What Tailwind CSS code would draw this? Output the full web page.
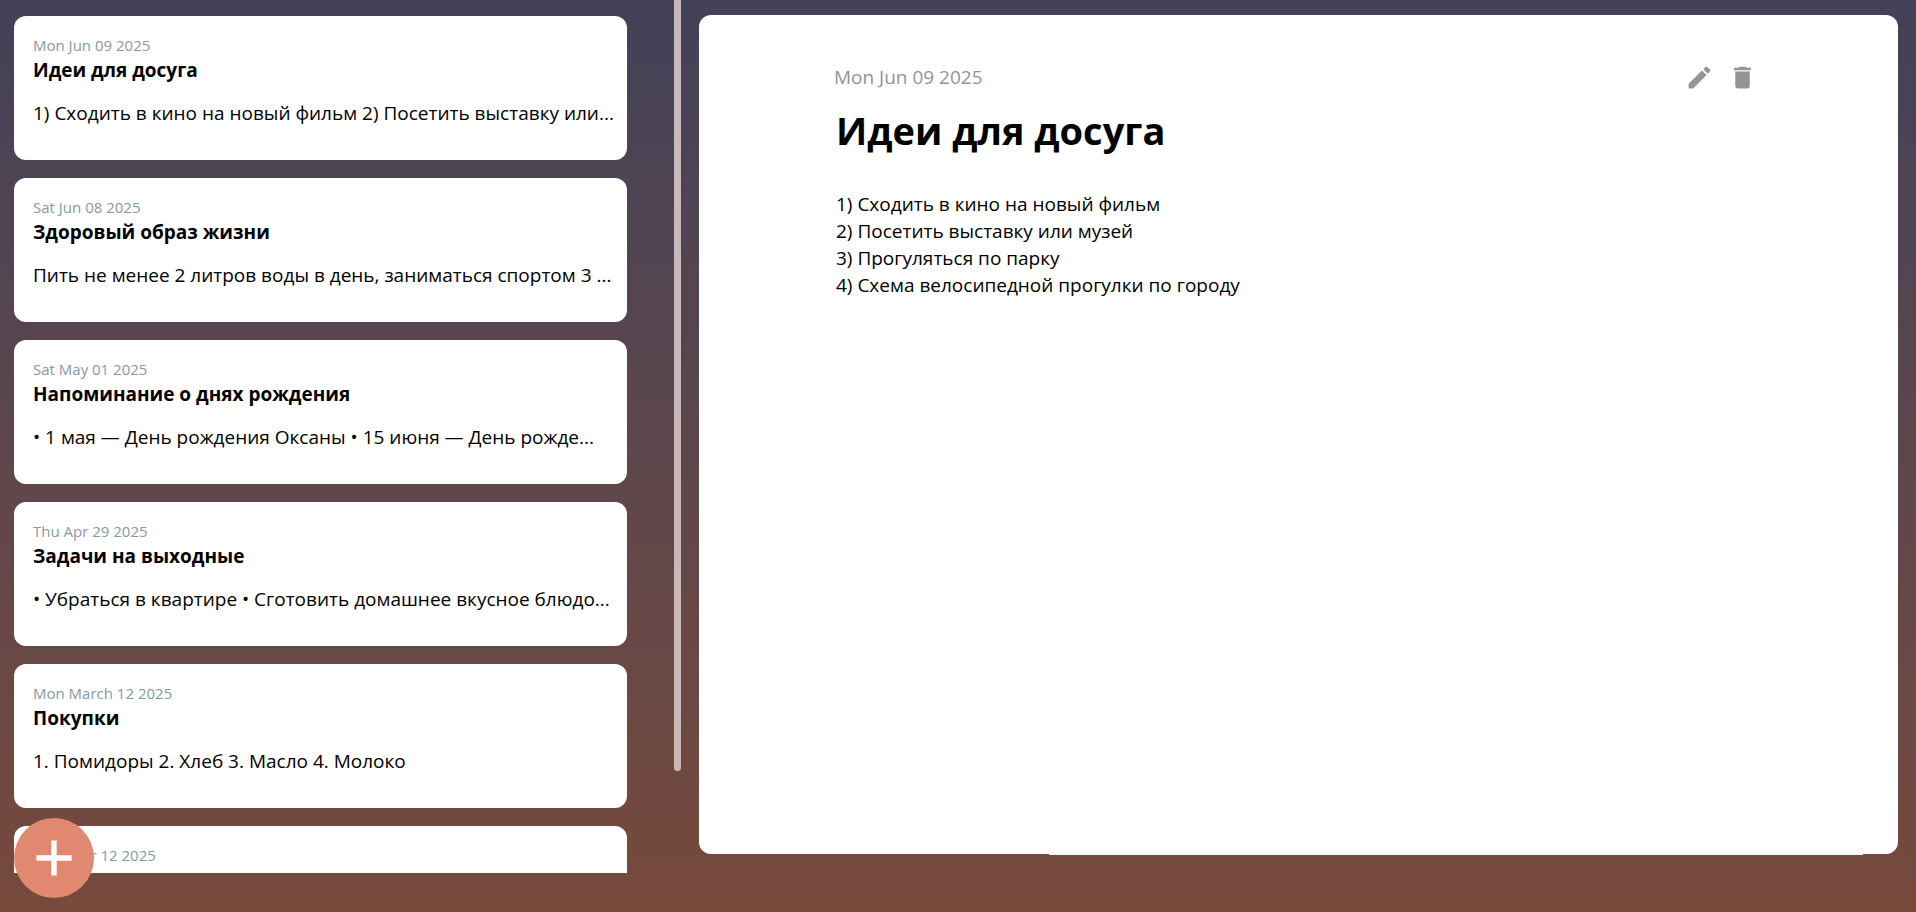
<!DOCTYPE html>
<html lang="ru">
<head>
<meta charset="utf-8">
<title>Заметки</title>
<script src="https://cdn.jsdelivr.net/npm/@tailwindcss/browser@4"></script>
</head>
<body class="h-screen overflow-hidden bg-linear-to-b from-[#434158] to-[#774a3c] font-['Open_Sans','Noto_Sans',sans-serif] text-black">
<div class="flex h-full">
  <aside class="flex h-[873px] max-h-full w-[681px] shrink-0 justify-between overflow-hidden">
    <ul class="flex w-[627px] flex-col gap-[18px] pt-4 pl-[14px]">
      <li class="h-36 shrink-0 rounded-xl bg-white px-[19px] pt-[17px]">
        <time class="block text-[15px] leading-6 text-[#8699a5]">Mon Jun 09 2025</time>
        <h2 class="text-[19px] leading-[27px] font-bold">Идеи для досуга</h2>
        <p class="mt-4 text-[19px] leading-[27px] whitespace-nowrap">1) Сходить в кино на новый фильм 2) Посетить выставку или...</p>
      </li>
      <li class="h-36 shrink-0 rounded-xl bg-white px-[19px] pt-[17px]">
        <time class="block text-[15px] leading-6 text-[#8699a5]">Sat Jun 08 2025</time>
        <h2 class="text-[19px] leading-[27px] font-bold">Здоровый образ жизни</h2>
        <p class="mt-4 text-[19px] leading-[27px] whitespace-nowrap">Пить не менее 2 литров воды в день, заниматься спортом 3 ...</p>
      </li>
      <li class="h-36 shrink-0 rounded-xl bg-white px-[19px] pt-[17px]">
        <time class="block text-[15px] leading-6 text-[#8699a5]">Sat May 01 2025</time>
        <h2 class="text-[19px] leading-[27px] font-bold">Напоминание о днях рождения</h2>
        <p class="mt-4 text-[19px] leading-[27px] whitespace-nowrap">• 1 мая — День рождения Оксаны • 15 июня — День рожде...</p>
      </li>
      <li class="h-36 shrink-0 rounded-xl bg-white px-[19px] pt-[17px]">
        <time class="block text-[15px] leading-6 text-[#8699a5]">Thu Apr 29 2025</time>
        <h2 class="text-[19px] leading-[27px] font-bold">Задачи на выходные</h2>
        <p class="mt-4 text-[19px] leading-[27px] whitespace-nowrap">• Убраться в квартире • Сготовить домашнее вкусное блюдо...</p>
      </li>
      <li class="h-36 shrink-0 rounded-xl bg-white px-[19px] pt-[17px]">
        <time class="block text-[15px] leading-6 text-[#8699a5]">Mon March 12 2025</time>
        <h2 class="text-[19px] leading-[27px] font-bold">Покупки</h2>
        <p class="mt-4 text-[19px] leading-[27px] whitespace-nowrap">1. Помидоры 2. Хлеб 3. Масло 4. Молоко</p>
      </li>
      <li class="h-36 shrink-0 rounded-xl bg-white px-[19px] pt-[17px]">
        <time class="block text-[15px] leading-6 text-[#8699a5]">Mon Mar 12 2025</time>
      </li>
    </ul>
    <div class="h-[771px] w-[7px] rounded-b-full bg-[#c9b8b8]"></div>
  </aside>
  <main class="mt-[15px] mr-[18px] mb-[58px] ml-[18px] flex min-w-0 grow flex-col rounded-xl bg-white px-[135px] pt-[46px]">
    <header class="flex h-8 items-center justify-between pr-[6px]">
      <time class="text-[19px] leading-8 text-[#999294]">Mon Jun 09 2025</time>
      <div class="flex gap-[14px] text-[#999294]">
        <button type="button" aria-label="Редактировать"><svg class="size-[29px]" viewBox="0 0 24 24" fill="currentColor"><path d="M3 17.25V21h3.75L17.81 9.94l-3.75-3.75L3 17.25zM20.71 7.04a.996.996 0 0 0 0-1.41l-2.34-2.34a.996.996 0 0 0-1.41 0l-1.83 1.83 3.75 3.75 1.83-1.83z"/></svg></button>
        <button type="button" aria-label="Удалить"><svg class="size-[29px]" viewBox="0 0 24 24" fill="currentColor"><path d="M6 19c0 1.1.9 2 2 2h8c1.1 0 2-.9 2-2V7H6v12zM19 4h-3.5l-1-1h-5l-1 1H5v2h14V4z"/></svg></button>
      </div>
    </header>
    <h1 class="mt-[10px] pl-0.5 text-[38px] leading-[54px] font-bold">Идеи для досуга</h1>
    <p class="mt-[34px] pl-0.5 text-[19px] leading-[27px] whitespace-pre-line">1) Сходить в кино на новый фильм
2) Посетить выставку или музей
3) Прогуляться по парку
4) Схема велосипедной прогулки по городу</p>
    <div class="mt-auto -mr-[100px] -mb-px h-px w-[814px] self-end bg-white"></div>
  </main>
</div>
<button type="button" aria-label="Добавить" class="fixed bottom-[14px] left-[14px] flex size-20 items-center justify-center rounded-full bg-[#e18871] text-white">
  <svg class="size-9" viewBox="0 0 36 36" fill="currentColor"><path d="M15.300.400h5.400v14.900h14.900v5.400H20.700v14.900h-5.400V20.700H.400v-5.400h14.900z"/></svg>
</button>
</body>
</html>
